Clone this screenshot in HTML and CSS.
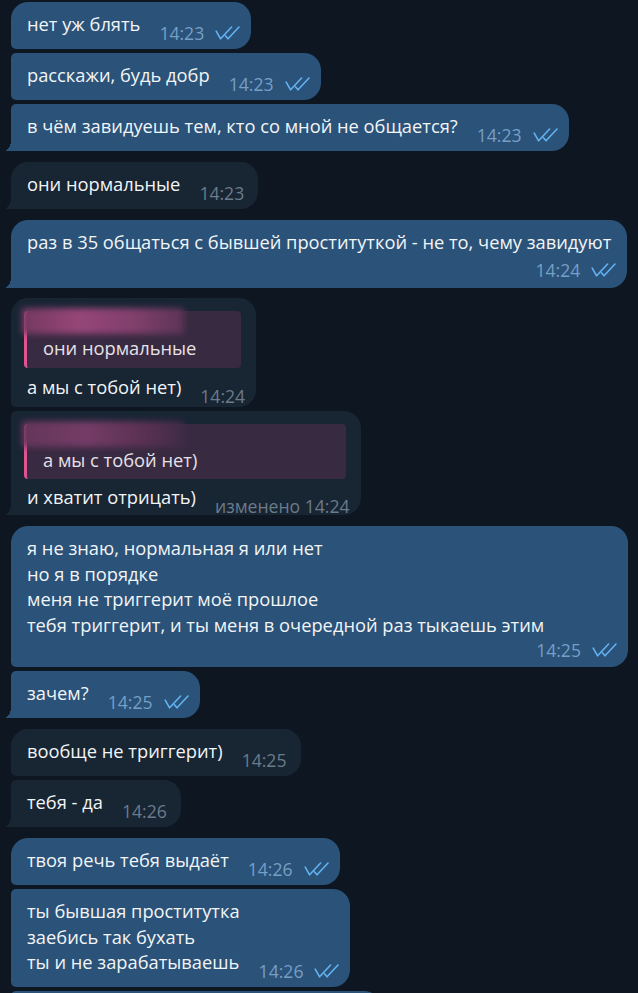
FILE: index.html
```html
<!DOCTYPE html>
<html lang="ru">
<head>
<meta charset="utf-8">
<link rel="stylesheet" href="styles.css">
</head>
<body>
<div class="chat">

  <div class="group out">
    <div class="msg first"><span class="text">нет уж блять</span><span class="meta"><span class="time">14:23</span><svg class="check" viewBox="0 0 26 14"><path d="M1.2 5.2 L5.6 12.8 L16.6 1"/><path d="M10.4 9.8 L13 12.8 L24 1"/></svg></span></div>
    <div class="msg mid"><span class="text">расскажи, будь добр</span><span class="meta"><span class="time">14:23</span><svg class="check" viewBox="0 0 26 14"><path d="M1.2 5.2 L5.6 12.8 L16.6 1"/><path d="M10.4 9.8 L13 12.8 L24 1"/></svg></span></div>
    <div class="msg last"><span class="text">в чём завидуешь тем, кто со мной не общается?</span><span class="meta"><span class="time">14:23</span><svg class="check" viewBox="0 0 26 14"><path d="M1.2 5.2 L5.6 12.8 L16.6 1"/><path d="M10.4 9.8 L13 12.8 L24 1"/></svg></span></div>
  </div>

  <div class="group in">
    <div class="msg single"><span class="text">они нормальные</span><span class="meta"><span class="time">14:23</span></span></div>
  </div>

  <div class="group out tight">
    <div class="msg single stacked one-line"><span class="text">раз в 35 общаться с бывшей проституткой - не то, чему завидуют</span><span class="meta"><span class="time">14:24</span><svg class="check" viewBox="0 0 26 14"><path d="M1.2 5.2 L5.6 12.8 L16.6 1"/><path d="M10.4 9.8 L13 12.8 L24 1"/></svg></span></div>
  </div>

  <div class="group in">
    <div class="msg first has-reply">
      <div class="reply"><div class="redact"></div><div class="reply-name"></div><div class="reply-text">они нормальные</div></div>
      <div class="row"><span class="text">а мы с тобой нет)</span><span class="meta"><span class="time">14:24</span></span></div>
    </div>
    <div class="msg last has-reply compact">
      <div class="reply"><div class="redact soft"></div><div class="reply-name"></div><div class="reply-text">а мы с тобой нет)</div></div>
      <div class="row"><span class="text">и хватит отрицать)</span><span class="meta"><span class="time">изменено 14:24</span></span></div>
    </div>
  </div>

  <div class="group out">
    <div class="msg first stacked wide"><span class="text">я не знаю, нормальная я или нет
но я в порядке
меня не триггерит моё прошлое
тебя триггерит, и ты меня в очередной раз тыкаешь этим</span><span class="meta"><span class="time">14:25</span><svg class="check" viewBox="0 0 26 14"><path d="M1.2 5.2 L5.6 12.8 L16.6 1"/><path d="M10.4 9.8 L13 12.8 L24 1"/></svg></span></div>
    <div class="msg last"><span class="text">зачем?</span><span class="meta"><span class="time">14:25</span><svg class="check" viewBox="0 0 26 14"><path d="M1.2 5.2 L5.6 12.8 L16.6 1"/><path d="M10.4 9.8 L13 12.8 L24 1"/></svg></span></div>
  </div>

  <div class="group in">
    <div class="msg first"><span class="text">вообще не триггерит)</span><span class="meta"><span class="time">14:25</span></span></div>
    <div class="msg last"><span class="text">тебя - да</span><span class="meta"><span class="time">14:26</span></span></div>
  </div>

  <div class="group out">
    <div class="msg first"><span class="text">твоя речь тебя выдаёт</span><span class="meta"><span class="time">14:26</span><svg class="check" viewBox="0 0 26 14"><path d="M1.2 5.2 L5.6 12.8 L16.6 1"/><path d="M10.4 9.8 L13 12.8 L24 1"/></svg></span></div>
    <div class="msg mid"><span class="text">ты бывшая проститутка
заебись так бухать
ты и не зарабатываешь</span><span class="meta"><span class="time">14:26</span><svg class="check" viewBox="0 0 26 14"><path d="M1.2 5.2 L5.6 12.8 L16.6 1"/><path d="M10.4 9.8 L13 12.8 L24 1"/></svg></span></div>
    <div class="msg mid peek"></div>
  </div>

</div>
</body>
</html>
```

FILE: styles.css
```css
html, body {
  margin: 0;
  padding: 0;
  background: #0e1621;
  height: 100%;
  overflow: hidden;
}

.chat {
  display: flex;
  flex-direction: column;
  gap: 11px;
  padding: 2px 10px 0 11px;
  font-family: "Open Sans", "Noto Sans", sans-serif;
  font-size: 18.3px;
  color: #f2f5f7;
}

.group {
  display: flex;
  flex-direction: column;
  align-items: flex-start;
  gap: 4px;
}

.group.tight {
  margin-bottom: -1px;
}

.msg {
  position: relative;
  display: flex;
  align-items: flex-end;
  padding: 9px 16px 12.3px 16px;
  border-radius: 17px;
  box-sizing: border-box;
}

.out .msg { background: #2b5278; }
.in .msg { background: #182533; }

.msg.first { border-radius: 17px 17px 17px 5px; }
.msg.mid { border-radius: 5px 17px 17px 5px; }
.msg.last { border-radius: 5px 17px 17px 0; }
.msg.single { border-radius: 17px 17px 17px 0; }

.msg.last::before,
.msg.single::before {
  content: "";
  position: absolute;
  left: -7px;
  bottom: 0;
  width: 7px;
  height: 11px;
  background: radial-gradient(ellipse 7px 11px at 0 0, transparent 98%, #2b5278 100%);
}

.in .msg.last::before,
.in .msg.single::before {
  background: radial-gradient(ellipse 7px 11px at 0 0, transparent 98%, #182533 100%);
}

.text {
  line-height: 25.7px;
  white-space: pre-line;
}

.meta {
  display: flex;
  align-items: center;
  margin-left: 19px;
  margin-bottom: -6px;
  height: 20px;
  flex-shrink: 0;
}

.in .meta {
  margin-right: -2px;
}

.time {
  font-size: 17.6px;
  line-height: 20px;
  color: #769fc7;
}

.in .time { color: #6b7b8b; }

.check {
  width: 26px;
  height: 14px;
  margin-left: 11px;
  margin-right: -6px;
  fill: none;
  stroke: #62b3f2;
  stroke-width: 1.6;
  stroke-linecap: round;
  stroke-linejoin: round;
}

.msg.stacked {
  flex-direction: column;
  align-items: stretch;
}

.msg.stacked .meta {
  align-self: flex-end;
  margin-left: 0;
  margin-top: 2px;
  margin-bottom: -5px;
}

.msg.stacked.one-line .meta {
  margin-top: 5px;
  margin-bottom: -4px;
}

.msg.wide {
  align-self: stretch;
}

.msg.has-reply {
  flex-direction: column;
  align-items: stretch;
  padding: 13px 13px 7px 13px;
}

.msg.has-reply.compact {
  padding-top: 13.5px;
  padding-bottom: 5px;
}

.row {
  display: flex;
  align-items: flex-end;
  padding-left: 3px;
  margin-top: 6px;
}

.compact .row {
  margin-top: 5px;
}

.reply {
  position: relative;
  background: #382a41;
  border-left: 3px solid #e0548f;
  border-radius: 4px;
  margin-right: 2px;
  padding: 0 16px 7.5px 16px;
}

.compact .reply {
  padding-bottom: 6.5px;
}

.reply-name {
  height: 23.5px;
}

.compact .reply-name {
  height: 22.5px;
}

.reply-text {
  line-height: 26px;
  color: #e6e2e8;
}

.redact {
  position: absolute;
  left: -5px;
  top: -3px;
  width: 162px;
  height: 26px;
  background: linear-gradient(90deg, #74395f 0%, #964679 35%, #803f6c 70%, #5c3456 100%);
  filter: blur(3px);
}

.redact.soft {
  background: linear-gradient(90deg, #643659 0%, #743c67 40%, #5a3152 75%, #3f2c46 100%);
}

.msg.peek {
  width: 370px;
  height: 44px;
}
```
